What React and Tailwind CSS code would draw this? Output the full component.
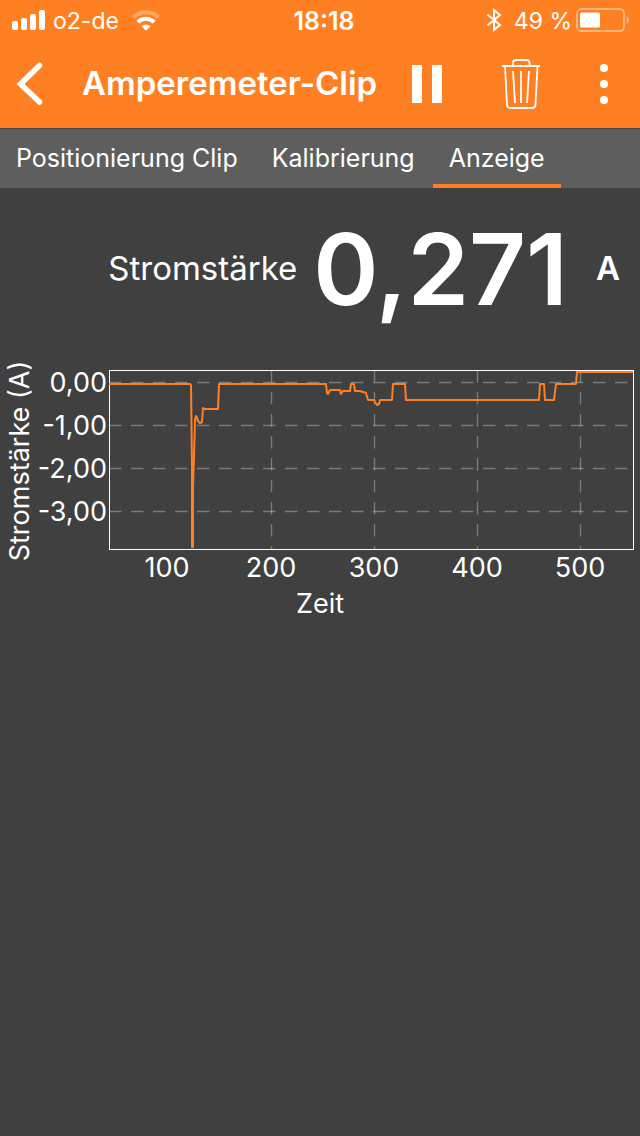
import React, { useState } from "react";

const TABS = ["Positionierung Clip", "Kalibrierung", "Anzeige"];

// Axis ticks with their place in the chart's viewBox
const Y_TICKS = [
  { label: "0,00", y: 24 },
  { label: "-1,00", y: 67 },
  { label: "-2,00", y: 110 },
  { label: "-3,00", y: 153 },
];
const X_TICKS = [
  { label: "100", x: 167 },
  { label: "200", x: 271 },
  { label: "300", x: 374 },
  { label: "400", x: 477 },
  { label: "500", x: 580 },
];

// Measured current over time
const CURVE =
  "109,26 190,26 191,27 192,110 192,189 193,189 193,130 194,98 195,62 196,58 197,60 198,63 200,65 202,64 203,50 204,51 218,51 219,26 326,26 327,35 328,36 330,32 340,32 341,36 343,33 350,33 351,26 354,26 355,33 360,33 366,35 368,42 374,42 375,44 377,47 379,46 380,42 392,42 393,26 405,26 406,42 510,42 539,42 540,26 544,26 545,42 554,42 556,26 576,26 577,14 633,14";

function StatusBar() {
  return (
    <div className="grid h-10 grid-cols-3 items-center text-[23px]">
      <div className="flex items-center gap-2 pl-3">
        <svg width="33" height="20" viewBox="0 0 33 20" fill="#fff" aria-hidden="true">
          <rect x="0" y="11" width="6" height="9" rx="2" />
          <rect x="9" y="8" width="6" height="12" rx="2" />
          <rect x="18" y="4" width="6" height="16" rx="2" />
          <rect x="27" y="0" width="6" height="20" rx="2" />
        </svg>
        <span className="pt-0.5 whitespace-nowrap">o2-de</span>
        <svg className="ml-1 shrink-0" width="30" height="21" viewBox="0 0 30 21" aria-hidden="true">
          <path d="M2.500 7.500 A17.500 17.500 0 0 1 27.500 7.500" fill="none" stroke="#ffa767" strokeWidth="4" />
          <path d="M6.800 12.200 A11.500 11.500 0 0 1 23.200 12.200" fill="none" stroke="#fff" strokeWidth="4" />
          <path d="M10.500 16.200 A6.500 6.500 0 0 1 19.500 16.200 L15 20.800 Z" fill="#fff" />
        </svg>
      </div>
      <span className="pt-0.5 pl-2 text-center text-[25px] leading-none font-semibold">18:18</span>
      <div className="flex items-center justify-end gap-1 pr-2.5">
        <svg className="mr-2" width="16" height="24" viewBox="0 0 16 24" aria-hidden="true">
          <path
            d="M1.500 6.500 L14 17 L8 22 V2 L14 7 L1.500 17.500"
            fill="none"
            stroke="#fff"
            strokeWidth="2"
          />
        </svg>
        <span className="pt-0.5 whitespace-nowrap">49 %</span>
        <svg width="54" height="24" viewBox="0 0 54 24" aria-hidden="true">
          <rect x="1" y="1" width="47" height="22" rx="4.5" fill="none" stroke="#ffb37c" strokeWidth="2" />
          <rect x="4" y="4.5" width="20" height="15" rx="1.5" fill="#fff" />
          <path d="M50.500 8 A4.500 4.500 0 0 1 50.500 16 Z" fill="#ffb37c" />
        </svg>
      </div>
    </div>
  );
}

function Header({ running, onToggle }) {
  return (
    <div className="flex h-22 items-center">
      <button type="button" aria-label="Zurück" className="flex h-full w-[82px] items-center pl-4">
        <svg width="28" height="44" viewBox="0 0 28 44" aria-hidden="true">
          <path
            d="M23.500 3.500 L4.500 22 L23.500 40"
            fill="none"
            stroke="#fff"
            strokeWidth="5.5"
            strokeLinecap="round"
            strokeLinejoin="miter"
          />
        </svg>
      </button>
      <h1 className="flex-1 text-[33px] font-semibold whitespace-nowrap">Amperemeter-Clip</h1>
      <button
        type="button"
        aria-label={running ? "Pause" : "Start"}
        onClick={onToggle}
        className="flex h-full w-[94px] items-center justify-center"
      >
        <svg width="30" height="38" viewBox="0 0 30 38" fill="#fff" aria-hidden="true">
          {running ? <path d="M0 0 H10 V38 H0 Z M20 0 H30 V38 H20 Z" /> : <path d="M0 0 L30 19 L0 38 Z" />}
        </svg>
      </button>
      <button type="button" aria-label="Löschen" className="flex h-full w-[94px] items-center justify-center">
        <svg width="38" height="50" viewBox="0 0 38 50" fill="none" stroke="#fff" strokeWidth="1.8" aria-hidden="true">
          <path d="M0 7 H38" strokeWidth="2" />
          <path d="M11 7 V4 Q11 1 14 1 H24.500 Q27.500 1 27.500 4 V7" />
          <path d="M3 7 L5 46 Q5.300 49 8.500 49 H30 Q33 49 33.500 46 L35.500 7" />
          <path d="M11 12 L13 44 M19 12 V44 M27 12 L25 44" />
        </svg>
      </button>
      <button type="button" aria-label="Menü" className="flex h-full w-[72px] items-center justify-center">
        <svg width="8" height="40" viewBox="0 0 8 40" fill="#fff" aria-hidden="true">
          <circle cx="4" cy="4" r="4" />
          <circle cx="4" cy="20" r="4" />
          <circle cx="4" cy="36" r="4" />
        </svg>
      </button>
    </div>
  );
}

function Chart() {
  return (
    <svg
      viewBox="0 0 640 264"
      className="block w-full font-['Inter',sans-serif] text-[27px]"
      fill="#fff"
      role="img"
      aria-label="Stromstärke (A) über Zeit"
    >
      <g stroke="#fff" strokeOpacity="0.3" strokeWidth="1.4" strokeDasharray="12.5 9.5">
        {Y_TICKS.map((t) => (
          <line key={t.label} x1="109" x2="633" y1={t.y + 0.5} y2={t.y + 0.5} />
        ))}
        {X_TICKS.slice(1).map((t) => (
          <line key={t.label} x1={t.x + 0.5} x2={t.x + 0.5} y1="12" y2="191" />
        ))}
      </g>
      <rect x="109.5" y="12.5" width="524" height="179" fill="none" stroke="#fff" />
      <polyline points={CURVE} fill="none" stroke="#ff8022" strokeWidth="2" strokeLinejoin="round" />
      {Y_TICKS.map((t) => (
        <text key={t.label} x="107" y={t.y + 10} textAnchor="end">
          {t.label}
        </text>
      ))}
      {X_TICKS.map((t) => (
        <text key={t.label} x={t.x} y="219" textAnchor="middle">
          {t.label}
        </text>
      ))}
      <text x="320" y="255" textAnchor="middle">
        Zeit
      </text>
      <text transform="translate(29 103) rotate(-90)" textAnchor="middle">
        Stromstärke (A)
      </text>
    </svg>
  );
}

export default function App() {
  const [activeTab, setActiveTab] = useState("Anzeige");
  const [running, setRunning] = useState(true);

  return (
    <div className="min-h-screen bg-[#404040] font-['Inter',sans-serif] text-white">
      <header className="bg-[#ff8022]">
        <StatusBar />
        <Header running={running} onToggle={() => setRunning(!running)} />
      </header>

      <nav className="flex h-15 gap-0.5 border-t border-[#484848] bg-[#5e5e5e]">
        {TABS.map((tab) => (
          <button
            key={tab}
            type="button"
            onClick={() => setActiveTab(tab)}
            className={`border-b-4 px-4 pt-1 text-[25px] whitespace-nowrap ${
              tab === activeTab ? "border-[#ff8022]" : "border-transparent"
            }`}
          >
            {tab}
          </button>
        ))}
      </nav>

      <main>
        <div className="flex h-[170px] items-center justify-end gap-4 pr-5 pb-2">
          <span className="text-[33px]">Stromstärke</span>
          <span className="text-[99px] leading-none font-semibold">0,271</span>
          <span className="pl-3 text-[33px] font-semibold">A</span>
        </div>
        <Chart />
      </main>
    </div>
  );
}
